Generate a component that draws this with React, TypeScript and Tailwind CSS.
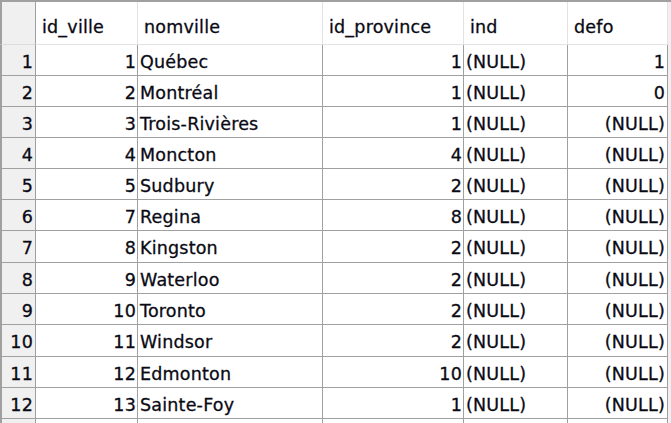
// Result grid: ville table (SQLyog-like data view)

type Row = [number, number, string, number, string, string];

const rows: Row[] = [
  [1, 1, 'Québec', 1, '(NULL)', '1'],
  [2, 2, 'Montréal', 1, '(NULL)', '0'],
  [3, 3, 'Trois-Rivières', 1, '(NULL)', '(NULL)'],
  [4, 4, 'Moncton', 4, '(NULL)', '(NULL)'],
  [5, 5, 'Sudbury', 2, '(NULL)', '(NULL)'],
  [6, 7, 'Regina', 8, '(NULL)', '(NULL)'],
  [7, 8, 'Kingston', 2, '(NULL)', '(NULL)'],
  [8, 9, 'Waterloo', 2, '(NULL)', '(NULL)'],
  [9, 10, 'Toronto', 2, '(NULL)', '(NULL)'],
  [10, 11, 'Windsor', 2, '(NULL)', '(NULL)'],
  [11, 12, 'Edmonton', 10, '(NULL)', '(NULL)'],
  [12, 13, 'Sainte-Foy', 1, '(NULL)', '(NULL)'],
];

const font = { fontFamily: '"DejaVu Sans", sans-serif' };

function BodyRow({ r, tall }: { r: Row | null; tall?: boolean }) {
  const [num, id, nom, prov, ind, defo] = r ?? [null, null, '', null, '', ''];
  return (
    <div className={`flex ${tall ? 'h-[32px]' : 'h-[31px]'} shrink-0 text-[17.5px] leading-[34px] tracking-[0.2px] text-[#0a0a14] [-webkit-text-stroke:0.3px_#0a0a14]`}>
      <div className="w-[36px] shrink-0 border-l-2 border-r border-b border-[#a0a0a0] bg-[#f0f0f0] pr-[2px] text-right">
        {num}
      </div>
      <div className="w-[102px] shrink-0 border-r border-b border-[#a0a0a0] pr-[1px] text-right">{id}</div>
      <div className="w-[185px] shrink-0 border-r border-b border-[#a0a0a0] pl-[2px]">{nom}</div>
      <div className="w-[141px] shrink-0 border-r border-b border-[#a0a0a0] pr-[1px] text-right">{prov}</div>
      <div className="w-[104px] shrink-0 border-r border-b border-[#a0a0a0] pl-[2px]">{ind}</div>
      <div className="w-[100px] shrink-0 border-r border-b border-[#a0a0a0] pr-[2px] text-right">{defo}</div>
      <div className="flex-1 bg-[#f0f0f0]" />
    </div>
  );
}

export default function App() {
  const headers = [
    { label: 'id_ville', w: 'w-[102px]' },
    { label: 'nomville', w: 'w-[185px]' },
    { label: 'id_province', w: 'w-[141px]' },
    { label: 'ind', w: 'w-[104px]' },
    { label: 'defo', w: 'w-[100px]' },
  ];

  return (
    <div className="h-[423px] w-[671px] overflow-hidden bg-white" style={font}>
      <div className="flex h-screen flex-col border-t-2 border-[#a0a0a0]">
        {/* Header */}
        <div className="flex h-[43px] shrink-0 text-[17.5px] leading-[50px] tracking-[0.2px] text-[#0a0a14] [-webkit-text-stroke:0.3px_#0a0a14]">
          <div className="w-[36px] shrink-0 border-l-2 border-r border-b border-l-[#a0a0a0] border-r-[#a0a0a0] border-b-[#dcdcdc] bg-[#f0f0f0]" />
          {headers.map((h) => (
            <div key={h.label} className={`${h.w} shrink-0 border-r border-b border-[#e3e3e3] pl-[6px]`}>
              {h.label}
            </div>
          ))}
          <div className="flex-1 bg-[#f0f0f0]" />
        </div>

        {rows.map((r, i) => (
          <BodyRow key={r[0]} r={r} tall={i === 6 || i === 9} />
        ))}
        <BodyRow r={null} />
      </div>
    </div>
  );
}
